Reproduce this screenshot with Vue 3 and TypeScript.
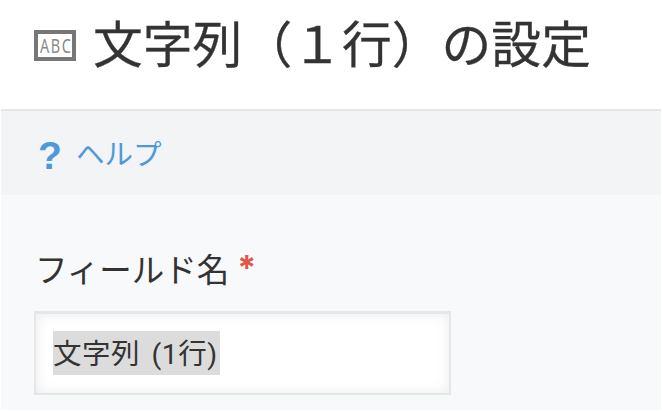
<script setup lang="ts">
import { ref } from 'vue'

const title = ref('文字列（１行）の設定')
const fieldLabel = ref('フィールド名')
const fieldName = ref('文字列 (1行)')
</script>

<template>
  <main class="dialog">
    <header class="header">
      <svg class="type-icon" viewBox="0 0 42 31" aria-hidden="true">
        <rect x="2" y="2" width="38" height="27" fill="#fff" stroke="#777" stroke-width="4" />
        <text transform="translate(6 23) scale(0.74 1)">ABC</text>
      </svg>
      <h1 class="title">{{ title }}</h1>
    </header>
    <nav class="help">
      <a class="help-link">
        <span class="help-mark">?</span>
        <span class="help-text">ヘルプ</span>
      </a>
    </nav>
    <section class="body">
      <label class="label">{{ fieldLabel }}<span class="required">*</span></label>
      <div class="input"><span class="selection">{{ fieldName }}</span></div>
    </section>
  </main>
</template>

<style>
body {
  margin: 0;
  background: #fff;
  overflow: hidden;
}
</style>

<style scoped>
.dialog {
  box-sizing: border-box;
  width: 662px;
  height: 411px;
  padding: 0 1px 1px;
  display: flex;
  flex-direction: column;
  color: #333;
  font-family: "Noto Sans CJK JP", sans-serif;
}
.header {
  box-sizing: border-box;
  height: 109px;
  display: flex;
  align-items: flex-start;
  padding-left: 33px;
}
.type-icon {
  width: 42px;
  height: 31px;
  margin-top: 30px;
  flex: none;
}
.type-icon text {
  font-family: "Noto Sans", sans-serif;
  font-size: 19.5px;
  font-weight: 400;
  letter-spacing: 2.2px;
  fill: #888;
}
.title {
  margin: 5px 0 0 17px;
  font-size: 49.8px;
  line-height: 72px;
  font-weight: 400;
  white-space: nowrap;
  -webkit-text-stroke: 0.3px #333;
}
.help {
  box-sizing: border-box;
  height: 86px;
  border-top: 2px solid #e3e7e8;
  background: #f2f4f6;
  display: flex;
  align-items: center;
  padding-left: 37px;
}
.help-link {
  display: flex;
  align-items: center;
  color: #4f98d9;
}
.help-mark {
  width: 38px;
  padding-top: 5px;
  font-family: "Liberation Sans", sans-serif;
  font-size: 39px;
  line-height: 40px;
  font-weight: 700;
}
.help-text {
  font-size: 28.5px;
  line-height: 40px;
}
.body {
  flex: 1;
  background: #f8f9fb;
  padding: 50px 0 0 34px;
}
.label {
  display: flex;
  height: 46px;
  font-size: 32.5px;
  line-height: 46px;
}
.required {
  margin-left: 8px;
  color: #df5746;
  font-family: Inter, sans-serif;
  font-weight: 700;
  font-size: 34px;
  line-height: 46px;
}
.input {
  box-sizing: border-box;
  width: 417px;
  height: 84px;
  margin: 20px 0 0 -1px;
  padding: 17px 17px 0;
  border: 2px solid #e3e7e8;
  border-top-width: 3px;
  background: #fff;
  box-shadow: inset 0 0 14px #ececec;
}
.selection {
  display: block;
  height: 44px;
  width: 167px;
  background: #dcdcdc;
  font-family: Roboto, "Noto Sans CJK JP", sans-serif;
  font-size: 28.5px;
  line-height: 48px;
  letter-spacing: 0.5px;
  word-spacing: 4px;
  white-space: nowrap;
}
</style>
